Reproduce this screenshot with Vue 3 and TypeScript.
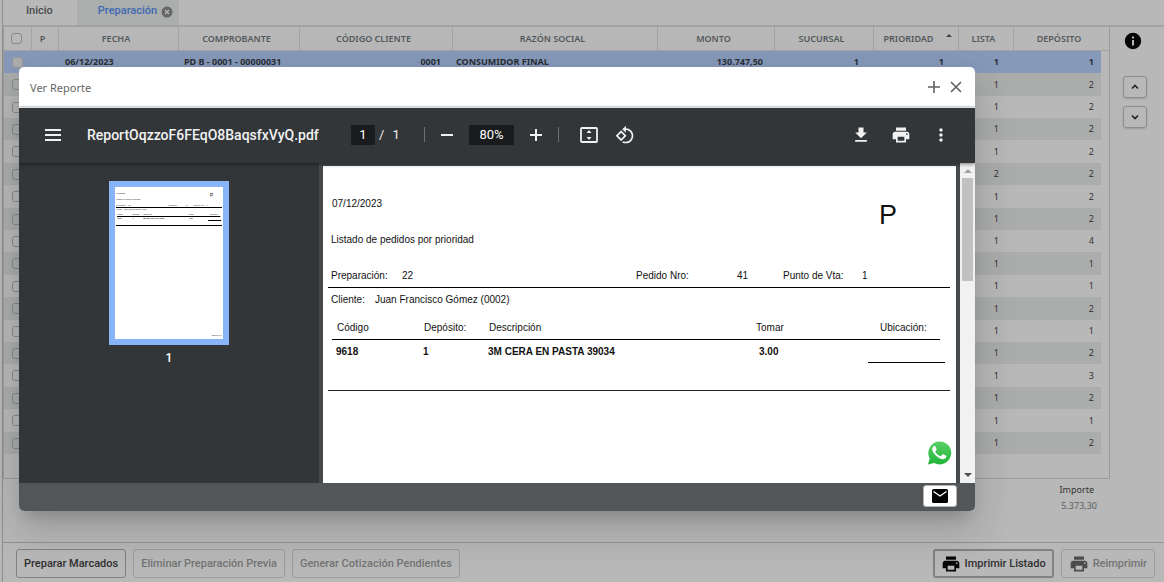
<script setup lang="ts">
import { ref } from 'vue'

interface Row {
  lista: number
  deposito: number
}

const deposits = [1, 2, 2, 2, 2, 2, 2, 2, 4, 1, 1, 2, 1, 2, 3, 2, 1, 2]
const rows: Row[] = deposits.map((deposito, i) => ({ lista: i === 5 ? 2 : 1, deposito }))

const currentPage = ref('1')
const zoomLevel = ref('80%')
const printerPath =
  'M19 8H5c-1.66 0-3 1.34-3 3v6h4v4h12v-4h4v-6c0-1.66-1.34-3-3-3zm-3 11H8v-5h8v5zm3-7c-.55 0-1-.45-1-1s.45-1 1-1 1 .45 1 1-.45 1-1 1zm-1-9H6v4h12V3z'
</script>

<template>
  <div class="screen">
    <main class="app">
      <nav class="tabs">
        <a href="#" class="tab">Inicio</a>
        <span class="tab active">
          <a href="#">Preparación</a>
          <button class="tab-close" aria-label="Cerrar pestaña">
            <svg viewBox="0 0 12 12" width="12" height="12">
              <circle cx="6" cy="6" r="5.5" fill="#666" />
              <path d="M4 4l4 4M8 4l-4 4" stroke="#b8b8b8" stroke-width="1.3" />
            </svg>
          </button>
        </span>
      </nav>

      <div class="work">
        <div class="grid-box">
          <table>
            <colgroup>
              <col class="c-check" /><col class="c-p" /><col class="c-fecha" /><col class="c-comp" />
              <col class="c-cod" /><col /><col class="c-monto" /><col class="c-suc" />
              <col class="c-prio" /><col class="c-lista" /><col class="c-dep" /><col class="c-end" />
            </colgroup>
            <thead>
              <tr>
                <th class="check"><input type="checkbox" aria-label="Marcar todos" /></th>
                <th>P</th>
                <th>FECHA</th>
                <th>COMPROBANTE</th>
                <th>CÓDIGO CLIENTE</th>
                <th>RAZÓN SOCIAL</th>
                <th>MONTO</th>
                <th>SUCURSAL</th>
                <th class="sorted"><span>PRIORIDAD</span><i class="sort"></i></th>
                <th>LISTA</th>
                <th colspan="2">DEPÓSITO</th>
              </tr>
            </thead>
            <tbody>
              <tr v-for="(row, i) in rows" :key="i" :class="{ selected: i === 0 }">
                <td class="check"><input type="checkbox" :checked="i === 0" aria-label="Marcar fila" /></td>
                <td></td>
                <td>{{ i === 0 ? '06/12/2023' : '' }}</td>
                <td class="comp">{{ i === 0 ? 'PD B - 0001 - 00000031' : '' }}</td>
                <td class="num">{{ i === 0 ? '0001' : '' }}</td>
                <td class="name">{{ i === 0 ? 'CONSUMIDOR FINAL' : '' }}</td>
                <td class="num">{{ i === 0 ? '130.747,50' : '' }}</td>
                <td class="num">{{ i === 0 ? '1' : '' }}</td>
                <td class="num">{{ i === 0 ? '1' : '' }}</td>
                <td class="num">{{ row.lista }}</td>
                <td class="num last">{{ row.deposito }}</td>
                <td class="end"></td>
              </tr>
            </tbody>
          </table>
        </div>
        <aside class="side">
          <svg class="info" viewBox="0 0 18 18" width="18" height="18">
            <circle cx="9" cy="9" r="8.2" fill="#050505" />
            <path d="M8 8h2v5.500H8zM8 4.500h2v2H8z" fill="#b8b8b8" />
          </svg>
          <button class="move" aria-label="Subir">
            <svg viewBox="0 0 10 10" width="10" height="10"><path d="M2 6.5l3-3 3 3" /></svg>
          </button>
          <button class="move" aria-label="Bajar">
            <svg viewBox="0 0 10 10" width="10" height="10"><path d="M2 3.5l3 3 3-3" /></svg>
          </button>
        </aside>
      </div>

      <section class="summary">
        <span class="label">Importe</span>
        <span class="amount">5.373,30</span>
      </section>

      <footer class="actions">
        <button class="btn">Preparar Marcados</button>
        <button class="btn" disabled>Eliminar Preparación Previa</button>
        <button class="btn" disabled>Generar Cotización Pendientes</button>
        <button class="btn icon strong push">
          <svg viewBox="0 0 24 24" width="20" height="20"><path :d="printerPath" /></svg>Imprimir Listado
        </button>
        <button class="btn icon" disabled>
          <svg viewBox="0 0 24 24" width="20" height="20"><path :d="printerPath" /></svg>Reimprimir
        </button>
      </footer>
    </main>

    <div class="dialog" role="dialog" aria-labelledby="dialog-title">
      <header class="dialog-head">
        <h2 id="dialog-title">Ver Reporte</h2>
        <button aria-label="Maximizar">
          <svg viewBox="0 0 14 14" width="14" height="14"><path d="M7 1v12M1 7h12" /></svg>
        </button>
        <button aria-label="Cerrar">
          <svg viewBox="0 0 14 14" width="14" height="14"><path d="M2 2l10 10M12 2L2 12" /></svg>
        </button>
      </header>

      <div class="toolbar">
        <div class="toolbar-start">
          <button aria-label="Menú">
            <svg viewBox="0 0 16 12" width="16" height="12"><path d="M0 0h16v2H0zM0 5h16v2H0zM0 10h16v2H0z" /></svg>
          </button>
          <span class="file">ReportOqzzoF6FEqO8BaqsfxVyQ.pdf</span>
        </div>
        <input v-model="currentPage" class="page-input" aria-label="Página" />
        <span class="pages"><span>/</span><span>1</span></span>
        <i class="sep"></i>
        <button aria-label="Alejar">
          <svg viewBox="0 0 12 12" width="12" height="12"><path d="M0 5h12v2H0z" /></svg>
        </button>
        <input v-model="zoomLevel" class="zoom-input" aria-label="Zoom" />
        <button aria-label="Acercar">
          <svg viewBox="0 0 12 12" width="12" height="12"><path d="M5 0h2v5h5v2H7v5H5V7H0V5h5z" /></svg>
        </button>
        <i class="sep"></i>
        <button class="fit" aria-label="Ajustar a la página">
          <svg viewBox="0 0 18 16" width="18" height="16">
            <rect x="1" y="1" width="16" height="14" rx="1" fill="none" stroke="#f1f1f1" stroke-width="1.8" />
            <path d="M9 3L11.500 6h-5zM9 13L6.500 10h5z" />
          </svg>
        </button>
        <button class="rotate" aria-label="Girar">
          <svg viewBox="0 0 24 24" width="20" height="20">
            <path d="M7.34 6.41L.86 12.9l6.49 6.48 6.49-6.48-6.5-6.49zM3.69 12.9l3.66-3.66L11 12.900l-3.660 3.660-3.650-3.660zm15.670-6.260C17.610 4.880 15.300 4 13 4V.760L8.760 5 13 9.240V6c1.790 0 3.580.680 4.950 2.050 2.730 2.730 2.730 7.170 0 9.900C16.580 19.320 14.790 20 13 20c-.970 0-1.940-.210-2.840-.610l-1.490 1.490C10.020 21.620 11.510 22 13 22c2.300 0 4.610-.880 6.360-2.640 3.520-3.510 3.520-9.210 0-12.720z" />
          </svg>
        </button>
        <div class="toolbar-end">
          <button aria-label="Descargar">
            <svg viewBox="0 0 24 24" width="20" height="20"><path d="M19 9h-4V3H9v6H5l7 7 7-7zM5 18v2h14v-2H5z" /></svg>
          </button>
          <button aria-label="Imprimir">
            <svg viewBox="0 0 24 24" width="20" height="20"><path :d="printerPath" /></svg>
          </button>
          <button aria-label="Más acciones">
            <svg viewBox="0 0 24 24" width="20" height="20">
              <path d="M12 8c1.100 0 2-.9 2-2s-.9-2-2-2-2 .9-2 2 .9 2 2 2zm0 2c-1.100 0-2 .9-2 2s.9 2 2 2 2-.9 2-2-.9-2-2-2zm0 6c-1.100 0-2 .9-2 2s.9 2 2 2 2-.9 2-2-.9-2-2-2z" />
            </svg>
          </button>
        </div>
      </div>

      <div class="viewer">
        <aside class="thumbs">
          <svg class="thumb" viewBox="0 0 633 891" width="108" height="152">
            <rect width="633" height="891" fill="#fff" />
            <g font-size="10" fill="#111">
              <text x="9" y="42">07/12/2023</text>
              <text x="8" y="78">Listado de pedidos por prioridad</text>
              <text x="557" y="56" font-size="28">P</text>
              <text x="8" y="114">Preparación:</text>
              <text x="79" y="114">22</text>
              <text x="313" y="113">Pedido Nro:</text>
              <text x="414" y="113">41</text>
              <text x="461" y="112">Punto de Vta:</text>
              <text x="539" y="113">1</text>
              <text x="9" y="137">Cliente:</text>
              <text x="52" y="137">Juan Francisco Gómez (0002)</text>
              <text x="14" y="165">Código</text>
              <text x="102" y="165">Depósito:</text>
              <text x="167" y="165">Descripción</text>
              <text x="433" y="165">Tomar</text>
              <text x="557" y="165">Ubicación:</text>
              <g font-weight="bold">
                <text x="14" y="189">9618</text>
                <text x="102" y="189">1</text>
                <text x="165" y="189">3M CERA EN PASTA 39034</text>
                <text x="436" y="189">3.00</text>
              </g>
              <text x="565" y="874">Página 1 de 1</text>
            </g>
            <path d="M6 120h621M12 173h605M546 197h76M6 226h621" stroke="#000" stroke-width="6" />
          </svg>
          <span>1</span>
        </aside>
        <div class="paper-area">
          <article class="paper">
            <div class="top">
              <div>
                <p class="date">07/12/2023</p>
                <p>Listado de pedidos por prioridad</p>
              </div>
              <strong>P</strong>
            </div>
            <div class="prep">
              <span>Preparación:</span><span>22</span><span>Pedido Nro:</span><span>41</span>
              <span>Punto de Vta:</span><span>1</span>
            </div>
            <div class="client"><span>Cliente:</span><span>Juan Francisco Gómez (0002)</span></div>
            <div class="items head">
              <span>Código</span><span>Depósito:</span><span>Descripción</span><span>Tomar</span>
              <span class="place">Ubicación:</span>
            </div>
            <div class="items body">
              <span>9618</span><span>1</span><span>3M CERA EN PASTA 39034</span><span>3.00</span><span class="blank"></span>
            </div>
          </article>
        </div>
        <div class="scroll">
          <i class="arrow up"></i>
          <i class="bar"></i>
          <i class="arrow down"></i>
        </div>
        <a href="#" class="whatsapp" aria-label="WhatsApp">
          <svg viewBox="0 0 26 26" width="26" height="26">
            <defs>
              <linearGradient id="wa" x1="0" y1="0" x2="0" y2="1">
                <stop offset="0" stop-color="#5bd066" />
                <stop offset="1" stop-color="#22b43a" />
              </linearGradient>
            </defs>
            <path d="M2 24.500l1.700-6A11.500 11.500 0 1 1 8.200 23z" fill="url(#wa)" />
            <path d="M9.600 6.800c-.4-.8-.7-.8-1.200-.8-1.400.3-2.300 1.700-2.200 3.300.2 2 1.500 4 3.400 6 2.200 2.200 4.500 3.600 7 3.900 1.700.1 3.300-.8 3.600-2.200.2-.8.1-1.200-.3-1.400l-2.700-1.300c-.4-.2-.7-.1-1 .3l-1 1.300c-.3.300-.5.300-.9.200-2-.8-3.700-2.200-4.800-4.200-.2-.4-.1-.6.1-.9l.8-1c.2-.3.200-.6.1-.9z" fill="#fff" />
          </svg>
        </a>
      </div>

      <footer class="dialog-foot">
        <button aria-label="Enviar por correo">
          <svg viewBox="0 0 16 14" width="16" height="14">
            <rect width="16" height="14" rx="1.500" fill="#000" />
            <path d="M1.500 2.500L8 7l6.500-4.500" fill="none" stroke="#fff" stroke-width="1.400" />
          </svg>
        </button>
      </footer>
    </div>
  </div>
</template>

<style>
body {
  margin: 0;
  background: #b8b8b8;
}
</style>

<style scoped>
* {
  box-sizing: border-box;
}
.screen {
  position: relative;
  min-height: 100vh;
  overflow: hidden;
  background: #b8b8b8;
  font-family: 'Noto Sans', 'Open Sans', sans-serif;
  font-size: 9px;
  color: #333;
}
button {
  font: inherit;
  color: inherit;
  margin: 0;
  padding: 0;
  border: 0;
  background: none;
  display: flex;
  align-items: center;
  justify-content: center;
}
a {
  color: inherit;
  text-decoration: none;
}
.app {
  min-height: 100vh;
  display: flex;
  flex-direction: column;
  margin-left: 2px;
  border-left: 1px solid #8e8e8e;
}
.tabs {
  display: flex;
  height: 27px;
  border-bottom: 2px solid #a3a3a3;
  font: 500 11px/22px Roboto, sans-serif;
  color: #4c4c4c;
}
.tab {
  padding: 0 24px 0 23px;
}
.tab.active {
  display: flex;
  gap: 4px;
  padding: 0 6px 0 21px;
  background: #aaaead;
  color: #3f68b2;
}
.tab-close {
  height: 23px;
}
.work {
  display: flex;
}
.grid-box {
  flex: 1;
  padding-bottom: 24px;
  border: solid #9b9b9b;
  border-width: 0 1px 1px;
}
table {
  width: 100%;
  table-layout: fixed;
  border-collapse: separate;
  border-spacing: 0;
}
.c-check { width: 28px; }
.c-p { width: 27px; }
.c-fecha { width: 120px; }
.c-comp { width: 121px; }
.c-cod { width: 153px; }
.c-monto { width: 117px; }
.c-suc { width: 99px; }
.c-prio { width: 85px; }
.c-lista { width: 55px; }
.c-dep { width: 87px; }
.c-end { width: 8px; }
th {
  height: 24px;
  padding: 0 5px 0 0;
  border-right: 1px solid #a3a3a3;
  border-bottom: 1px solid #a3a3a3;
  font-weight: 600;
  color: #54595d;
  white-space: nowrap;
}
th:last-child {
  border-right: 0;
}
.sorted {
  position: relative;
}
.sorted span {
  margin-right: 10px;
}
.sort {
  position: absolute;
  top: 7px;
  right: 6px;
  border: solid transparent;
  border-width: 0 3px 3px;
  border-bottom-color: #444;
}
td {
  height: 22px;
  padding: 0 0 0 6px;
  line-height: 14px;
  white-space: nowrap;
}
tbody tr:nth-child(5n + 2) td,
tbody tr:nth-child(5n) td {
  height: 23px;
}
tbody tr:nth-child(even) td:not(.end) {
  background: #aaadac;
}
tbody tr.selected td:not(.end) {
  background: #8699b9;
}
.selected {
  font-weight: 700;
  color: #2b2f36;
}
td.num {
  padding: 0 15px 0 0;
  text-align: right;
}
td:nth-child(5).num,
td:nth-child(7).num {
  padding-right: 12px;
}
td.num.last {
  padding-right: 7px;
}
td.comp {
  padding-left: 5px;
}
td.name {
  padding-left: 3px;
}
.check {
  padding: 0 0 0 7px;
  text-align: left;
}
.check input {
  display: block;
  appearance: none;
  width: 11px;
  height: 11px;
  margin: 0;
  border: 1px solid #888;
  border-radius: 3px;
}
td.check {
  padding-left: 8px;
}
.check input:checked {
  background: #adadad;
  border-color: #989898;
}
.side {
  width: 54px;
  display: flex;
  flex-direction: column;
  align-items: center;
  padding-top: 5px;
  gap: 8px;
}
.info {
  margin: 0 8px 18px 0;
}
.move {
  width: 24px;
  height: 22px;
  margin-right: 4px;
  border: 1px solid #8d8d8d;
  border-radius: 3px;
  box-shadow: 0 1px 2px rgba(0, 0, 0, 0.15);
}
.move svg {
  fill: none;
  stroke: #222;
  stroke-width: 1.6;
}
.summary {
  flex: 1;
  display: flex;
  flex-direction: column;
  align-items: flex-end;
  padding: 3px 67px 0 0;
  line-height: 16px;
}
.summary .label {
  margin-right: 3px;
}
.amount {
  color: #5e5e5e;
}
.actions {
  display: flex;
  gap: 7px;
  padding: 6px 9px 4px 13px;
  border-top: 1px solid #929292;
}
.btn {
  height: 29px;
  padding: 1px 7px 0;
  border: 1px solid #828282;
  border-radius: 3px;
  font: 500 11px/16px Roboto, sans-serif;
  color: #303030;
  gap: 4px;
}
.btn:disabled {
  border-color: #9c9c9c;
  color: #737373;
}
.btn svg {
  fill: #080808;
}
.btn:disabled svg {
  fill: #4c4c4c;
}
.strong {
  padding: 1px 6px 0;
  border-width: 2px;
}
.push {
  margin-left: auto;
}
.dialog {
  position: absolute;
  top: 67px;
  left: 19px;
  right: 189px;
  border-radius: 5px;
  overflow: hidden;
  background: #fff;
  box-shadow: 0 11px 15px -7px rgba(0, 0, 0, 0.2), 0 24px 38px 3px rgba(0, 0, 0, 0.08),
    0 9px 46px 8px rgba(0, 0, 0, 0.06);
}
.dialog-head {
  display: flex;
  align-items: center;
  gap: 8px;
  height: 40px;
  padding: 0 12px 0 11px;
  border-bottom: 1px solid #e2e2e2;
  color: #666;
}
.dialog-head h2 {
  flex: 1;
  margin: 0;
  padding-top: 2px;
  font-size: 11px;
  font-weight: 400;
  line-height: 16px;
}
.dialog-head svg {
  fill: none;
  stroke: #606060;
  stroke-width: 1.6;
}
.toolbar {
  position: relative;
  display: flex;
  align-items: center;
  height: 55px;
  margin-top: 1px;
  padding: 0 18px 2px;
  background: #323639;
  box-shadow: 0 1px 4px rgba(0, 0, 0, 0.5);
  color: #f1f1f1;
  font: 13px/20px Roboto, sans-serif;
  z-index: 1;
}
.toolbar svg {
  fill: #f1f1f1;
}
.toolbar button {
  width: 32px;
  height: 32px;
}
.toolbar-start {
  display: flex;
  align-items: center;
  gap: 18px;
  width: 314px;
}
.file {
  font-size: 14px;
  font-weight: 500;
}
.page-input,
.zoom-input {
  width: 24px;
  height: 20px;
  margin: 0;
  padding: 0;
  border: 0;
  background: #191b1c;
  color: #fff;
  font: inherit;
  text-align: center;
}
.zoom-input {
  width: 45px;
  margin: 0 6px;
}
.pages {
  display: flex;
  gap: 8px;
  width: 49px;
  padding-left: 4px;
}
.sep {
  width: 1px;
  height: 15px;
  margin-right: 6px;
  background: #6f7274;
}
.zoom-input + button + .sep {
  margin: 0 14px 0 6px;
}
.rotate {
  margin-left: 4px;
}
.toolbar-end {
  display: flex;
  gap: 8px;
  margin-left: auto;
}
.viewer {
  position: relative;
  display: flex;
  height: 320px;
  background: #525659;
}
.thumbs {
  width: 300px;
  display: flex;
  flex-direction: column;
  align-items: center;
  padding-top: 18px;
  gap: 4px;
  background: #323639;
  color: #fff;
  font: 500 12px/18px Roboto, sans-serif;
}
.thumb {
  box-sizing: content-box;
  border: 6px solid #8ab4f8;
  font-family: 'Liberation Sans', Arial, sans-serif;
}
.paper-area {
  flex: 1;
  padding: 3px 4px 0;
  background: #464a4d;
}
.paper {
  height: 100%;
  padding: 31px 6px 0 5px;
  background: #fff;
  color: #111;
  font: 10px/14px 'Liberation Sans', Arial, sans-serif;
}
.paper p {
  margin: 0 0 0 3px;
}
.paper .date {
  margin: 0 0 22px 4px;
}
.top {
  display: flex;
  justify-content: space-between;
}
.top strong {
  margin-right: 53px;
  font-size: 27px;
  font-weight: 400;
  line-height: 36px;
}
.prep {
  display: grid;
  grid-template-columns: 71px 234px 101px 46px 79px 1fr;
  height: 41px;
  padding: 22px 0 0 3px;
  border-bottom: 1px solid #000;
}
.client {
  display: grid;
  grid-template-columns: 44px 1fr;
  padding: 5px 0 14px 3px;
}
.items {
  display: grid;
  grid-template-columns: 87px 65px 267px 113px 1fr;
}
.head {
  margin: 0 10px 0 4px;
  padding-left: 5px;
  height: 19px;
  border-bottom: 1px solid #000;
}
.place {
  padding-left: 11px;
}
.body {
  height: 51px;
  padding: 5px 5px 0 8px;
  border-bottom: 1px solid #222;
  font-weight: 700;
}
.body span:nth-child(4) {
  padding-left: 4px;
}
.blank {
  height: 18px;
  border-bottom: 1px solid #000;
}
.scroll {
  width: 15px;
  display: flex;
  flex-direction: column;
  align-items: center;
  padding: 6px 0;
  background: #f1f1f1;
}
.arrow {
  border: 4px solid transparent;
}
.up {
  border-top: 0;
  border-bottom-color: #a3a3a3;
}
.down {
  margin-top: auto;
  border-bottom: 0;
  border-top-color: #505050;
}
.bar {
  width: 11px;
  height: 103px;
  margin-top: 5px;
  background: #c1c1c1;
}
.whatsapp {
  position: absolute;
  right: 23px;
  bottom: 17px;
  height: 26px;
}
.dialog-foot {
  display: flex;
  justify-content: flex-end;
  height: 28px;
  padding: 2px 18px 0;
  background: #525659;
}
.dialog-foot button {
  width: 34px;
  height: 22px;
  border: 1px solid #b5b5b5;
  border-radius: 3px;
  background: #fff;
}
</style>
